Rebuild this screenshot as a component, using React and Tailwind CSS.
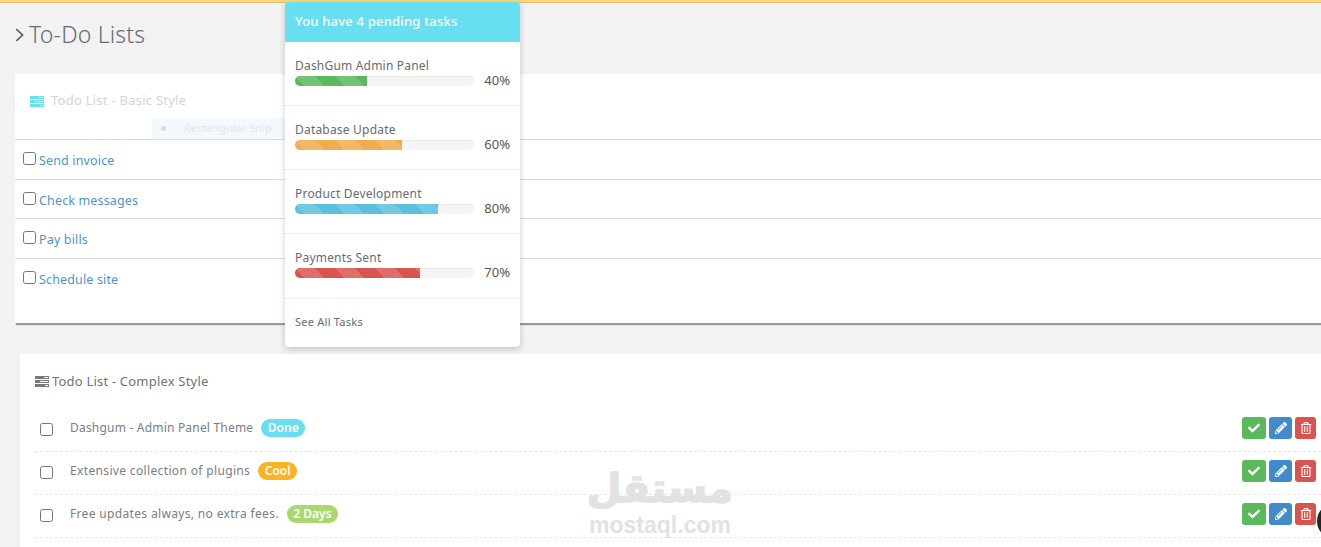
import { FaCheck, FaPencilAlt, FaRegTrashAlt } from 'react-icons/fa';

const FONT = "font-['Noto_Sans',sans-serif]";
const STRIPES = 'bg-[linear-gradient(45deg,rgba(255,255,255,.15)_25%,transparent_25%,transparent_50%,rgba(255,255,255,.15)_50%,rgba(255,255,255,.15)_75%,transparent_75%,transparent)] bg-[length:40px_40px]';

const tasks = [
  { name: 'DashGum Admin Panel', pct: 40, bar: 'bg-[#5cb85c]', h: 'h-16' },
  { name: 'Database Update', pct: 60, bar: 'bg-[#f0ad4e]', h: 'h-16' },
  { name: 'Product Development', pct: 80, bar: 'bg-[#5bc0de]', h: 'h-16' },
  { name: 'Payments Sent', pct: 70, bar: 'bg-[#d9534f]', h: 'h-[65px]' },
];

const basicRows = [
  { name: 'Send invoice', h: 'h-10' },
  { name: 'Check messages', h: 'h-[39px]' },
  { name: 'Pay bills', h: 'h-10' },
  { name: 'Schedule site', h: 'h-[64px]' },
];

const complexRows = [
  { name: 'Dashgum - Admin Panel Theme', tag: 'Done', color: 'bg-[#68dff0]', track: 'tracking-[0.2px]' },
  { name: 'Extensive collection of plugins', tag: 'Cool', color: 'bg-[#fcb322]', track: 'tracking-[0.35px]' },
  { name: 'Free updates always, no extra fees.', tag: '2 Days', color: 'bg-[#a9d86e]', track: 'tracking-[0.34px]' },
];

function TasksIcon({ className }) {
  return (
    <svg viewBox="0 0 14 11" className={className} fill="currentColor">
      <path d="M0 0h14v3H0zM0 4h14v3H0zM0 8h14v3H0z" />
      <path d="M9 1h4v1H9zM5 5h8v1H5zM10 9h3v1h-3z" fill="#fff" />
    </svg>
  );
}

function ActionButton({ color, children }) {
  return (
    <button className={`h-[22px] flex items-center justify-center rounded-[3px] text-white text-[12px] ${color}`}>
      {children}
    </button>
  );
}

export default function App() {
  return (
    <div className={`relative h-[547px] overflow-hidden bg-[#f2f2f2] ${FONT}`}>
      <div className="h-[3px] bg-[#ffd777] border-b border-[#e0c070]" />

      {/* Page title */}
      <h3 className="flex items-center h-[71px] pl-[15px] pb-[8px] text-[23px] font-light tracking-[0.2px] text-[#666b70]">
        <svg viewBox="0 0 10 16" className="w-[9px] h-[16px] mr-[5px] text-[#4f5458]" fill="none" stroke="currentColor" strokeWidth="1.6">
          <path d="M1.5 1.5 8.5 8l-7 6.5" />
        </svg>
        To-Do Lists
      </h3>

      {/* Basic list */}
      <section className="ml-[15px] bg-white shadow-[1px_2px_1px_#9a9a9a]">
        <div className="flex items-center gap-[7px] h-[66px] pl-[15px] pb-[11px] border-b border-[#dddddd] text-[13px] tracking-[0.25px] text-[#cfd6dd]">
          <TasksIcon className="w-[14px] h-[11px] text-[#68dff0]" />
          Todo List - Basic Style
        </div>
        {basicRows.map((row, i) => (
          <div key={row.name} className={`${row.h} pl-2 pt-[12px] flex items-start gap-[3px] text-[12.5px] leading-[18px] tracking-[0.15px] text-[#4f93cf] ${i < 3 ? 'border-b border-[#dddddd]' : ''}`}>
            <input type="checkbox" className="w-[13px] h-[13px]" />
            <a>{row.name}</a>
          </div>
        ))}
      </section>

      {/* Complex list */}
      <section className="ml-5 mt-[31px] bg-white h-[200px]">
        <div className="flex items-center gap-[3px] h-[55px] pl-[15px] text-[13px] tracking-[0.2px] text-[#6d7278]">
          <TasksIcon className="w-[14px] h-[11px] text-[#797979]" />
          Todo List - Complex Style
        </div>
        <div className="ml-[15px]">
          {complexRows.map((row) => (
            <div key={row.name} className="flex items-center h-[43px] border-b border-dashed border-[#e8e8e8] pl-[5px] pr-[5px] pb-[5px]">
              <input type="checkbox" className="w-[13px] h-[13px] mr-[17px] mt-[3px]" />
              <span className={`text-[12px] text-[#797d85] ${row.track}`}>{row.name}</span>
              <span className={`ml-2 h-[18px] px-[6.5px] rounded-full text-white text-[12px] font-semibold leading-[18px] ${row.color}`}>
                {row.tag}
              </span>
              <div className="ml-auto flex gap-[3px]">
                <ActionButton color="w-6 bg-[#5cb85c]"><FaCheck /></ActionButton>
                <ActionButton color="w-[23px] bg-[#428bca]"><FaPencilAlt /></ActionButton>
                <ActionButton color="w-[21px] bg-[#d9534f]"><FaRegTrashAlt /></ActionButton>
              </div>
            </div>
          ))}
        </div>
      </section>

      {/* Faded snip toolbar */}
      <div className="absolute left-[152px] top-[118px] w-[173px] h-[21px] flex items-center bg-[#f3f9fd] text-[11px] text-[#e2e7ec]">
        <span className="ml-[9px] w-[5px] h-[5px] rounded-full bg-[#d5dde3]" />
        <span className="ml-[18px]">Rectangular Snip</span>
      </div>

      {/* Tasks dropdown */}
      <div className="absolute left-[285px] top-[2px] w-[235px] h-[345px] bg-white rounded-[4px] shadow-[0_2px_6px_rgba(0,0,0,.2)]">
        <div className="h-10 pl-[10px] flex items-center rounded-t-[4px] bg-[#68dff0] text-white text-[13px] font-medium tracking-[0.2px]">
          You have 4 pending tasks
        </div>
        {tasks.map((task) => (
          <div key={task.name} className={`${task.h} px-[10px] pt-[13px] border-b border-[#eeeeee]`}>
            <div className="text-[12px] leading-[21px] tracking-[0.2px] text-[#666b70]">{task.name}</div>
            <div className="flex items-center h-[10px]">
              <div className="w-[179px] h-[10px] rounded-[5px] bg-[#f5f5f5] overflow-hidden shadow-[inset_0_1px_1px_rgba(0,0,0,.06)]">
                <div className={`h-full ${task.bar} ${STRIPES}`} style={{ width: `${task.pct}%` }} />
              </div>
              <span className="ml-auto text-[13px] text-[#555]">{task.pct}%</span>
            </div>
          </div>
        ))}
        <div className="pl-[10px] pt-[14px] text-[11px] leading-[18px] tracking-[0.25px] text-[#666b70]">See All Tasks</div>
      </div>

      {/* Watermark */}
      <div className="absolute left-[570px] top-[464px] w-[180px] flex flex-col items-center pointer-events-none text-[#e2e2e2]">
        <span dir="rtl" className="font-['DejaVu_Sans',sans-serif] font-bold text-[40px] leading-[49px] [-webkit-text-stroke:1.5px_#e2e2e2]">مستقل</span>
        <span className="font-['Liberation_Sans',sans-serif] font-bold text-[23px] leading-[24px]">mostaql.com</span>
      </div>

      {/* Chat bubble edge */}
      <div className="absolute left-[1317px] top-[503px] w-9 h-9 rounded-full bg-[#22252b]" />
    </div>
  );
}
